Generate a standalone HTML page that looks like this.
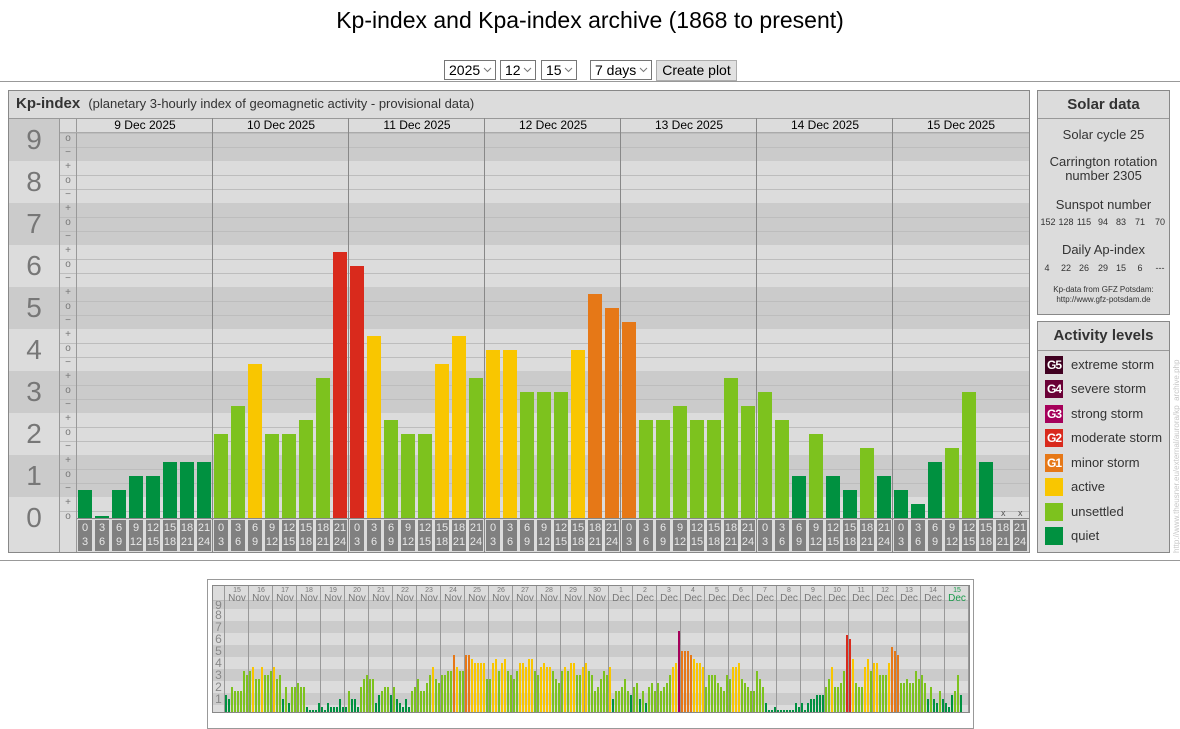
<!DOCTYPE html>
<html><head><meta charset="utf-8">
<style>
*{box-sizing:border-box}
body{margin:0;width:1180px;height:717px;overflow:hidden;background:#fff;font-family:"Liberation Sans",Arial,sans-serif;position:relative;color:#333}
.a{position:absolute}
.sel{position:absolute;top:60px;height:20px;border:1px solid #767676;background:#fff;font-size:14px;line-height:18px;padding-left:4px;color:#000}
.sel svg{position:absolute;right:3px;top:6px}
.hb{position:absolute;top:520px;width:14px;height:31px;background:#808080;color:#e8e8e8;font-size:11px;line-height:14px;text-align:center;padding-top:1px}
.bn{position:absolute;left:9px;width:50px;text-align:center;font-size:28px;color:#777;line-height:30px}
.sl{position:absolute;left:60px;width:16px;text-align:center;font-size:10px;color:#777;line-height:10px}
.dt{position:absolute;top:118px;width:136px;text-align:center;font-size:12px;color:#000;line-height:15px}
.lg{position:absolute;left:1045px;width:18px;height:18px;color:#fff;font-size:12px;font-weight:bold;line-height:18px;text-align:center;letter-spacing:-1px}
.lt{position:absolute;left:1071px;font-size:13px;color:#333;line-height:18px}
.bl{position:absolute;text-align:center;color:#777;width:24px;font-size:7px;line-height:7px}
.bl b{display:block;font-weight:normal;font-size:10px;line-height:10px}
.sn{position:absolute;top:217px;font-size:9px;color:#333;width:20px;text-align:center}
</style></head><body>
<div class="a" style="left:0;top:7px;width:1180px;text-align:center;font-size:23px;color:#000">Kp-index and Kpa-index archive (1868 to present)</div>

<div class="sel" style="left:444px;width:52px">2025<svg width="9" height="6"><path d="M1 1l3.5 3.5L8 1" stroke="#777" fill="none"/></svg></div>
<div class="sel" style="left:500px;width:36px">12<svg width="9" height="6"><path d="M1 1l3.5 3.5L8 1" stroke="#777" fill="none"/></svg></div>
<div class="sel" style="left:541px;width:36px">15<svg width="9" height="6"><path d="M1 1l3.5 3.5L8 1" stroke="#777" fill="none"/></svg></div>
<div class="sel" style="left:590px;width:62px">7 days<svg width="9" height="6"><path d="M1 1l3.5 3.5L8 1" stroke="#777" fill="none"/></svg></div>
<div class="a" style="left:656px;top:60px;width:81px;height:21px;border:1px solid #adadad;background:#e1e1e1;font-size:14px;line-height:19px;text-align:center;color:#000">Create plot</div>
<div class="a" style="left:0;top:81px;width:1180px;height:1px;background:#999"></div>
<div class="a" style="left:0;top:560px;width:1180px;height:1px;background:#999"></div>

<div class="a" style="left:8px;top:90px;width:1022px;height:463px;border:1px solid #888;background:#dcdcdc"></div>
<div class="a" style="left:9px;top:118px;width:1020px;height:1px;background:#999"></div>
<div class="a" style="left:16px;top:95px;font-size:15px;font-weight:bold;color:#333">Kp-index <span style="font-weight:normal;font-size:13px;margin-left:4px">(planetary 3-hourly index of geomagnetic activity - provisional data)</span></div>
<div id="main"></div>

<div class="dt" style="left:77px">9 Dec 2025</div>
<div class="dt" style="left:213px">10 Dec 2025</div>
<div class="dt" style="left:349px">11 Dec 2025</div>
<div class="dt" style="left:485px">12 Dec 2025</div>
<div class="dt" style="left:621px">13 Dec 2025</div>
<div class="dt" style="left:757px">14 Dec 2025</div>
<div class="dt" style="left:893px">15 Dec 2025</div>

<div class="bn" style="top:125px">9</div>
<div class="bn" style="top:167px">8</div>
<div class="bn" style="top:209px">7</div>
<div class="bn" style="top:251px">6</div>
<div class="bn" style="top:293px">5</div>
<div class="bn" style="top:335px">4</div>
<div class="bn" style="top:377px">3</div>
<div class="bn" style="top:419px">2</div>
<div class="bn" style="top:461px">1</div>
<div class="bn" style="top:503px">0</div>

<div id="hrs"></div>
<div class="a" style="left:1001px;top:508px;font-size:9px;color:#555">x</div>
<div class="a" style="left:1018px;top:508px;font-size:9px;color:#555">x</div>

<div class="a" style="left:1037px;top:90px;width:133px;height:225px;border:1px solid #888;background:#dcdcdc"></div>
<div class="a" style="left:1038px;top:118px;width:131px;height:1px;background:#999"></div>
<div class="a" style="left:1038px;top:96px;width:131px;text-align:center;font-size:15px;font-weight:bold;color:#333">Solar data</div>
<div class="a" style="left:1038px;top:127px;width:131px;text-align:center;font-size:13px;color:#333">Solar cycle 25</div>
<div class="a" style="left:1038px;top:155px;width:131px;text-align:center;font-size:13px;color:#333;line-height:14px">Carrington rotation<br>number 2305</div>
<div class="a" style="left:1038px;top:197px;width:131px;text-align:center;font-size:13px;color:#333">Sunspot number</div>
<div class="sn" style="left:1038px">152</div><div class="sn" style="left:1056px">128</div><div class="sn" style="left:1074px">115</div><div class="sn" style="left:1093px">94</div><div class="sn" style="left:1111px">83</div><div class="sn" style="left:1130px">71</div><div class="sn" style="left:1150px">70</div>
<div class="a" style="left:1038px;top:242px;width:131px;text-align:center;font-size:13px;color:#333">Daily Ap-index</div>
<div class="sn" style="left:1037px;top:263px">4</div><div class="sn" style="left:1056px;top:263px">22</div><div class="sn" style="left:1074px;top:263px">26</div><div class="sn" style="left:1093px;top:263px">29</div><div class="sn" style="left:1111px;top:263px">15</div><div class="sn" style="left:1130px;top:263px">6</div><div class="sn" style="left:1150px;top:263px">---</div>
<div class="a" style="left:1038px;top:285px;width:131px;text-align:center;font-size:8px;color:#333;line-height:10px">Kp-data from GFZ Potsdam:<br>http://www.gfz-potsdam.de</div>

<div class="a" style="left:1037px;top:321px;width:133px;height:232px;border:1px solid #888;background:#dcdcdc"></div>
<div class="a" style="left:1038px;top:350px;width:131px;height:1px;background:#999"></div>
<div class="a" style="left:1038px;top:327px;width:131px;text-align:center;font-size:15px;font-weight:bold;color:#333">Activity levels</div>
<div class="lg" style="top:356px;background:#3f0020">G5</div><div class="lt" style="top:356px">extreme storm</div>
<div class="lg" style="top:380px;background:#6a0036">G4</div><div class="lt" style="top:380px">severe storm</div>
<div class="lg" style="top:405px;background:#a5005a">G3</div><div class="lt" style="top:405px">strong storm</div>
<div class="lg" style="top:429px;background:#d92a1c">G2</div><div class="lt" style="top:429px">moderate storm</div>
<div class="lg" style="top:454px;background:#e67817">G1</div><div class="lt" style="top:454px">minor storm</div>
<div class="lg" style="top:478px;background:#f9c600"></div><div class="lt" style="top:478px">active</div>
<div class="lg" style="top:503px;background:#7dc21e"></div><div class="lt" style="top:503px">unsettled</div>
<div class="lg" style="top:527px;background:#009140"></div><div class="lt" style="top:527px">quiet</div>
<div class="a" style="width:220px;font-size:8px;color:#c8c8c8;transform:rotate(-90deg);transform-origin:0 0;left:1172px;top:553px;white-space:nowrap">http://www.theusner.eu/external/aurora/kp_archive.php</div>

<div class="a" style="left:207px;top:579px;width:767px;height:150px;border:1px solid #999;background:#fff"></div>
<div class="a" style="left:212px;top:585px;width:758px;height:128px;border:1px solid #888;background:#dcdcdc"></div>
<div id="bot"></div>
<div id="blab"></div>

<script>
(function(){
var C=function(t){return t<=4?'#009140':t<=10?'#7dc21e':t<=13?'#f9c600':t<=16?'#e67817':t<=19?'#d92a1c':t<=22?'#a5005a':'#6a0036'};
var h='';
for(var k=0;k<=9;k++){var tp=497-42*k,bt=539-42*k;var dark=(k%2==1);
 var pt=Math.max(tp,133),pb=Math.min(bt,518);
 if(pb>pt)h+='<div class="a" style="left:60px;top:'+pt+'px;width:969px;height:'+(pb-pt)+'px;background:'+(dark?'#cbcbcb':'#dcdcdc')+'"></div>';
 var lt=Math.max(tp,119),lb=Math.min(bt,552);
 h+='<div class="a" style="left:9px;top:'+lt+'px;width:50px;height:'+(lb-lt)+'px;background:'+(dark?'#cbcbcb':'#dcdcdc')+'"></div>';
}
for(var j=0;j<30;j++){var y=511-14*j;if(y<133)break;if(j%3==1)continue;
 h+='<div class="a" style="left:60px;top:'+y+'px;width:969px;height:1px;background:#bdbdbd"></div>';}
var lab=['−','o','+'];
for(var k=0;k<=9;k++){for(var s=-1;s<=1;s++){if(k==0&&s==-1)continue;if(k==9&&s==1)continue;
 var y=518-42*k-14*s;h+='<div class="sl" style="top:'+(y-6)+'px">'+lab[s+1]+'</div>';}}
h+='<div class="a" style="left:59px;top:118px;width:1px;height:434px;background:#999"></div>';
h+='<div class="a" style="left:76px;top:118px;width:1px;height:434px;background:#999"></div>';
h+='<div class="a" style="left:60px;top:132px;width:969px;height:1px;background:#aaa"></div>';
for(var d=1;d<7;d++)h+='<div class="a" style="left:'+(76+136*d)+'px;top:118px;width:1px;height:434px;background:#888"></div>';
h+='<div class="a" style="left:77px;top:518px;width:952px;height:1px;background:#888"></div>';
var K=[2,0,2,3,3,4,4,4, 6,8,11,6,6,7,10,19, 18,13,7,6,6,11,13,10, 12,12,9,9,9,12,16,15, 14,7,7,8,7,7,10,8, 9,7,3,6,3,2,5,3, 2,1,4,5,9,4];
for(var i=0;i<K.length;i++){var t=K[i],hh=Math.max(14*t,2);
 h+='<div class="a" style="left:'+(78+17*i)+'px;top:'+(518-hh)+'px;width:14px;height:'+hh+'px;background:'+C(t)+'"></div>';}
document.getElementById('main').innerHTML=h;
var hr='',H=[0,3,6,9,12,15,18,21,24];
for(var i=0;i<56;i++){var s=i%8;hr+='<div class="hb" style="left:'+(78+17*i)+'px">'+H[s]+'<br>'+H[s+1]+'</div>';}
document.getElementById('hrs').innerHTML=hr;
var b='';
for(var k=0;k<=9;k++){var tp=705-12*k,bt=717-12*k;var pt=Math.max(tp,600),pb=Math.min(bt,712);
 b+='<div class="a" style="left:213px;top:'+pt+'px;width:756px;height:'+(pb-pt)+'px;background:'+(k%2?'#cbcbcb':'#dcdcdc')+'"></div>';
 if(k>0)b+='<div class="a" style="left:212px;top:'+(tp+(k==9?2:0))+'px;width:13px;text-align:center;font-size:12px;color:#888;line-height:12px">'+k+'</div>';}
b+='<div class="a" style="left:213px;top:600px;width:756px;height:1px;background:#bbb"></div>';
for(var d=0;d<=31;d++)b+='<div class="a" style="left:'+(224+24*d)+'px;top:586px;width:1px;height:126px;background:#999"></div>';
var B=[4,3,6,5,5,5,10,9, 10,11,8,8,11,9,9,10, 11,8,9,3,6,2,6,6, 7,6,6,1,0,0,0,2, 1,0,2,1,1,1,3,1, 1,5,3,3,1,6,8,9, 8,8,2,4,5,6,6,4, 6,3,2,1,3,1,5,6, 8,5,5,7,9,11,8,7, 9,9,10,10,14,11,10,10, 14,14,13,12,12,12,12,8, 8,12,13,10,12,13,10,9, 8,10,12,12,11,13,13,10, 9,11,12,11,11,10,8,7, 10,11,10,12,12,9,9,11, 12,10,9,5,6,8,10,9, 11,3,5,5,6,8,5,4, 6,7,3,5,2,6,7,5, 7,5,6,7,9,11,12,20, 15,15,15,14,13,12,12,11, 6,9,9,9,7,6,5,9, 8,11,11,12,8,7,6,5, 5,10,8,6,2,0,0,1, 0,0,0,0,0,0,2,1].concat(K);
for(var i=0;i<B.length;i++){var t=B[i],hh=Math.max(4*t+1,2);
 b+='<div class="a" style="left:'+(225+3*i)+'px;top:'+(712-hh)+'px;width:2px;height:'+hh+'px;background:'+C(t)+'"></div>';}
document.getElementById('bot').innerHTML=b;
var L='',days=[];for(var d=15;d<=30;d++)days.push([d,'Nov']);for(var d=1;d<=15;d++)days.push([d,'Dec']);
for(var i=0;i<31;i++)L+='<div class="bl" style="left:'+(225+24*i)+'px;top:587px;'+(i==30?'color:#1a9a4a':'')+'">'+days[i][0]+'<b>'+days[i][1]+'</b></div>';
document.getElementById('blab').innerHTML=L;
})();
</script>
</body></html>
